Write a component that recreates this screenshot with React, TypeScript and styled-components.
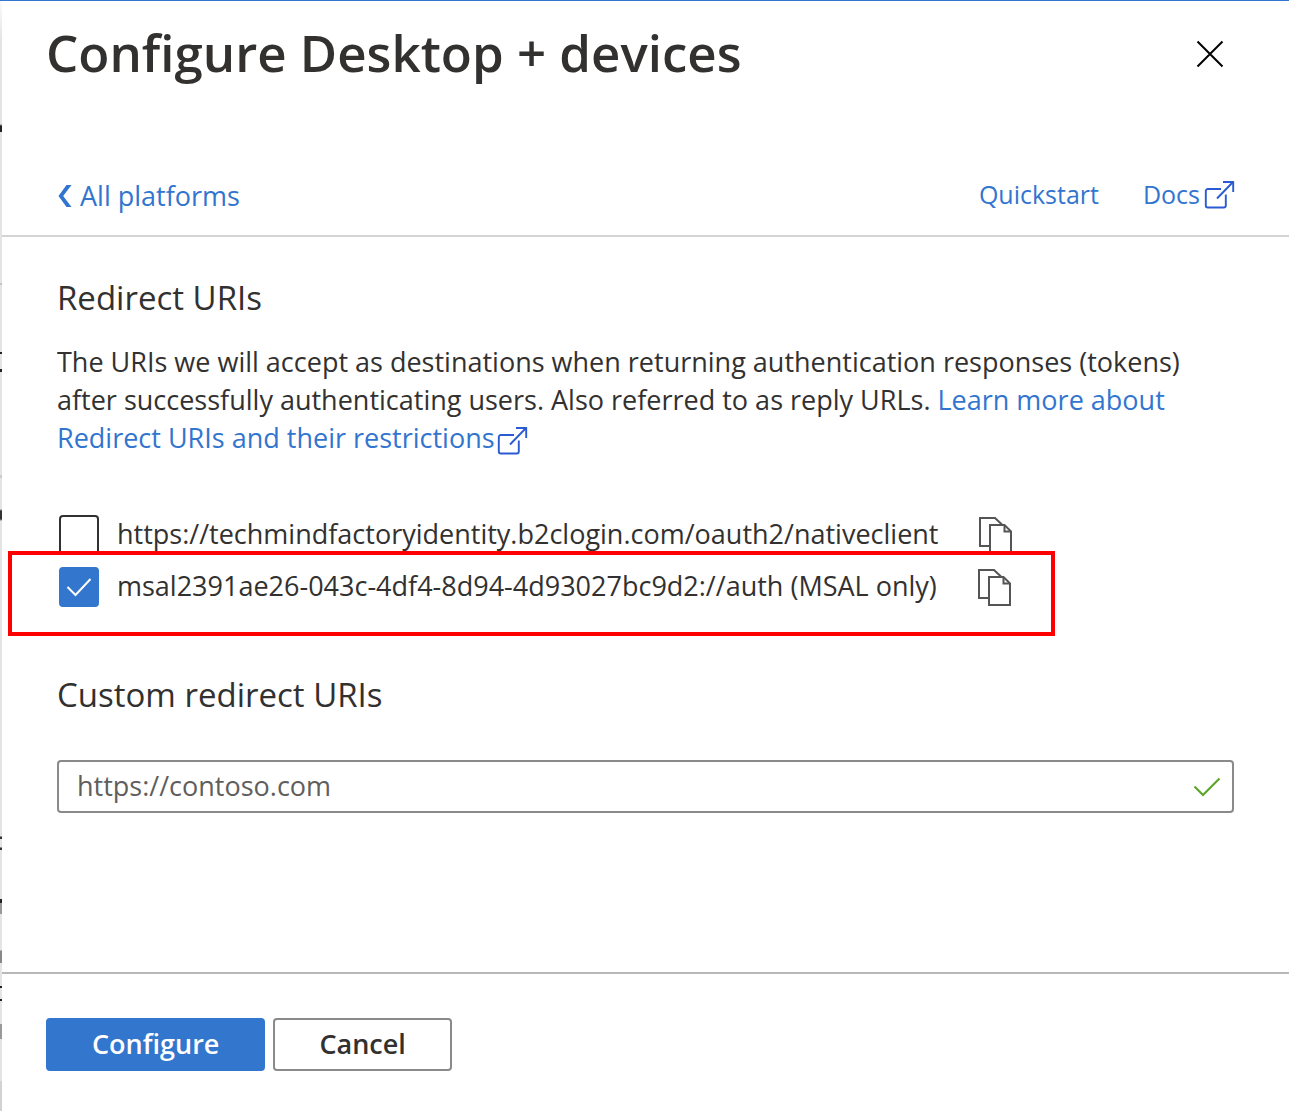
import React, { useState } from 'react';
import styled, { createGlobalStyle } from 'styled-components';

const color = {
  text: '#323130',
  link: '#3275cf',
  iconLink: '#2a5bd3',
  primary: '#3376cd',
  border: '#8a8a8a',
  alert: '#ff0000',
};

const GlobalStyle = createGlobalStyle`
  *, *::before, *::after { box-sizing: border-box; }
  body {
    margin: 0;
    background: #fff;
    color: ${color.text};
    font-family: "Segoe UI", "Open Sans", "Noto Sans", sans-serif;
    font-size: 27px;
    line-height: 38px;
  }
  svg { display: block; flex: none; }
`;

const Page = styled.div`
  display: grid;
  grid-template-columns: 2px minmax(0, 1fr);
  min-height: 100vh;
  border-top: 1px solid ${color.primary};
`;

/* Edge of the blade underneath, with the ends of its text showing. */
const Underlay = styled.div`
  background: linear-gradient(
    #fafafa 0, #e4e4e4 40px, #e4e4e4 123px, #222 125px, #222 131px, #e4e4e4 131px,
    #e4e4e4 282px, #c4c4c4 282px, #c4c4c4 284px, #e4e4e4 284px,
    #e4e4e4 351px, #222 351px, #222 353px, #e4e4e4 353px,
    #e4e4e4 368px, #222 368px, #222 371px, #e4e4e4 371px,
    #e4e4e4 474px, #ccc 474px, #ccc 477px, #e4e4e4 477px,
    #e4e4e4 508px, #333 510px, #333 518px, #e4e4e4 520px,
    #e4e4e4 835px, #333 836px, #333 838px, #e4e4e4 838px,
    #e4e4e4 846px, #333 847px, #333 849px, #e4e4e4 849px,
    #e4e4e4 898px, #222 898px, #222 902px, #999 902px, #999 913px, #e4e4e4 913px,
    #e4e4e4 949px, #888 950px, #888 962px, #e4e4e4 962px,
    #e4e4e4 985px, #222 985px, #222 987px, #e4e4e4 987px,
    #e4e4e4 998px, #222 998px, #222 1000px, #e4e4e4 1000px,
    #e4e4e4 1023px, #999 1023px, #999 1038px, #e4e4e4 1038px,
    #e4e4e4 1080px, #d2d2d2 1080px
  );
`;

const Blade = styled.main`
  display: flex;
  flex-direction: column;
`;

const Header = styled.header`
  display: flex;
  justify-content: space-between;
  align-items: center;
  padding: 17px 64px 0 44px;
`;

const Title = styled.h1`
  margin: 0;
  font-size: 51px;
  line-height: 68px;
  font-weight: 600;
`;

const IconButton = styled.button`
  display: flex;
  padding: 0;
  border: 0;
  background: none;
  color: ${(p) => p.color ?? '#000'};
  cursor: pointer;
`;

const CloseButton = styled(IconButton)`
  padding-top: 4px;
`;

const Toolbar = styled.nav`
  display: flex;
  justify-content: space-between;
  align-items: center;
  margin-top: 81px;
  padding: 8px 54px 18px 56px;
  border-bottom: 2px solid #d4d4d4;
`;

const Link = styled.a`
  color: ${color.link};
  text-decoration: none;
`;

const BackLink = styled(Link)`
  display: flex;
  align-items: center;
  gap: 8px;
`;

const HelpLinks = styled.div`
  display: flex;
  gap: 44px;
  padding-bottom: 4px;
  font-size: 25px;
`;

const HelpLink = styled(Link)`
  display: flex;
  align-items: center;
  gap: 4px;
`;

const Content = styled.div`
  flex: 1;
  padding: 39px 55px 48px;
`;

const SectionTitle = styled.h2`
  margin: 0;
  font-size: 33px;
  line-height: 44px;
  font-weight: 400;
`;

const Description = styled.p`
  margin: 23px 0 52px;

  svg {
    display: inline-block;
    margin-left: 2px;
    vertical-align: -7px;
  }
`;

const UriList = styled.ul`
  margin: 0 0 60px;
  padding: 0;
  list-style: none;
`;

const UriRow = styled.li`
  position: relative;
  display: flex;
  align-items: center;
  gap: 40px;
  width: fit-content;
  height: 52px;
`;

const UriLabel = styled.label`
  display: flex;
  align-items: center;
  gap: 18px;
  padding-left: 2px;
`;

const UriText = styled.span`
  padding-bottom: 2px;
`;

const TickBox = styled.span`
  display: grid;

  > * { grid-area: 1 / 1; }
  svg { pointer-events: none; }
`;

const Tick = styled.input`
  appearance: none;
  width: 40px;
  height: 40px;
  margin: 0;
  border: 2px solid ${color.text};
  border-radius: 4px;
  background: #fff;

  &:checked {
    border-color: ${color.primary};
    background: ${color.primary};
  }
`;

const Highlight = styled.span`
  position: absolute;
  inset: -10px -43px -23px -49px;
  border: 4px solid ${color.alert};
  pointer-events: none;
`;

const Field = styled.div`
  display: flex;
  align-items: center;
  margin-top: 43px;
  padding-right: 11px;
  border: 2px solid ${color.border};
  border-radius: 4px;
`;

const TextInput = styled.input`
  flex: 1;
  min-width: 0;
  height: 49px;
  padding: 0 18px 2px;
  border: 0;
  outline: 0;
  background: none;
  color: ${color.text};
  font: inherit;

  &::placeholder {
    color: #605e5c;
    opacity: 1;
  }
`;

const Footer = styled.footer`
  display: flex;
  gap: 8px;
  padding: 44px 44px 40px;
  border-top: 2px solid #b8b8b8;
`;

const Button = styled.button<{ $primary?: boolean }>`
  height: 53px;
  padding: 0 44px 2px;
  border: 2px solid ${(p) => (p.$primary ? color.primary : color.border)};
  border-radius: 4px;
  background: ${(p) => (p.$primary ? color.primary : '#fff')};
  color: ${(p) => (p.$primary ? '#fff' : color.text)};
  font: inherit;
  font-weight: 600;
  cursor: pointer;
`;

const CloseIcon = () => (
  <svg width="30" height="30" viewBox="0 0 30 30" fill="none" stroke="currentColor" strokeWidth="2" aria-hidden="true">
    <path d="M2.5 2.5l25 25M27.5 2.5l-25 25" />
  </svg>
);

const ChevronIcon = () => (
  <svg width="14" height="22" viewBox="0 0 14 22" fill="currentColor" aria-hidden="true">
    <path d="M8.5 0H13.5L5.2 11 13.5 22H8.5L.5 11z" />
  </svg>
);

const ExternalIcon = () => (
  <svg width="31" height="29" viewBox="0 0 31 29" fill="none" stroke={color.iconLink} strokeWidth="1.9" aria-hidden="true">
    <path d="M17 9H3.8a2 2 0 0 0-2 2v14.500a2 2 0 0 0 2 2h16a2 2 0 0 0 2-2V14.500" />
    <path d="M13 18.500L29 2M19 2h10.200v10" />
  </svg>
);

const CopyIcon = () => (
  <svg width="35" height="38" viewBox="0 0 35 38" fill="none" stroke="currentColor" strokeWidth="2" aria-hidden="true">
    <path d="M12 30H2V2h15l7.500 7" />
    <path d="M12 9h14.500l6.500 6.500V37H12z" />
    <path d="M26.500 9v6.500H33" />
  </svg>
);

const TickIcon = () => (
  <svg width="40" height="40" viewBox="0 0 40 40" fill="none" stroke="#fff" strokeWidth="2" aria-hidden="true">
    <path d="M8.500 20l8 8L31.500 12" />
  </svg>
);

const ValidIcon = () => (
  <svg width="28" height="20" viewBox="0 0 28 20" fill="none" stroke="#5fa52a" strokeWidth="2.200" aria-hidden="true">
    <path d="M1.500 9.500l8.500 8.500L26.500 1.500" />
  </svg>
);

const uris = [
  { uri: 'https://techmindfactoryidentity.b2clogin.com/oauth2/nativeclient', selected: false, highlighted: false },
  { uri: 'msal2391ae26-043c-4df4-8d94-4d93027bc9d2://auth (MSAL only)', selected: true, highlighted: true },
];

function UriOption({ uri, selected, highlighted }: (typeof uris)[number]) {
  const [checked, setChecked] = useState(selected);
  return (
    <UriRow>
      <UriLabel>
        <TickBox>
          <Tick type="checkbox" checked={checked} onChange={(e) => setChecked(e.target.checked)} />
          {checked && <TickIcon />}
        </TickBox>
        <UriText>{uri}</UriText>
      </UriLabel>
      <IconButton type="button" color="#555" aria-label="Copy to clipboard">
        <CopyIcon />
      </IconButton>
      {highlighted && <Highlight />}
    </UriRow>
  );
}

export default function App() {
  return (
    <>
      <GlobalStyle />
      <Page>
        <Underlay />
        <Blade>
          <Header>
            <Title>Configure Desktop + devices</Title>
            <CloseButton type="button" aria-label="Close">
              <CloseIcon />
            </CloseButton>
          </Header>
          <Toolbar>
            <BackLink href="#platforms">
              <ChevronIcon />
              All platforms
            </BackLink>
            <HelpLinks>
              <HelpLink href="#quickstart">Quickstart</HelpLink>
              <HelpLink href="#docs">
                Docs
                <ExternalIcon />
              </HelpLink>
            </HelpLinks>
          </Toolbar>
          <Content>
            <SectionTitle>Redirect URIs</SectionTitle>
            <Description>
              The URIs we will accept as destinations when returning authentication responses (tokens) after
              successfully authenticating users. Also referred to as reply URLs.{' '}
              <Link href="#restrictions">
                Learn more about Redirect URIs and their restrictions
                <ExternalIcon />
              </Link>
            </Description>
            <UriList>
              {uris.map((item) => (
                <UriOption key={item.uri} {...item} />
              ))}
            </UriList>
            <SectionTitle>
              <label htmlFor="custom-uri">Custom redirect URIs</label>
            </SectionTitle>
            <Field>
              <TextInput id="custom-uri" type="url" placeholder="https://contoso.com" />
              <ValidIcon />
            </Field>
          </Content>
          <Footer>
            <Button type="button" $primary>
              Configure
            </Button>
            <Button type="button">Cancel</Button>
          </Footer>
        </Blade>
      </Page>
    </>
  );
}
